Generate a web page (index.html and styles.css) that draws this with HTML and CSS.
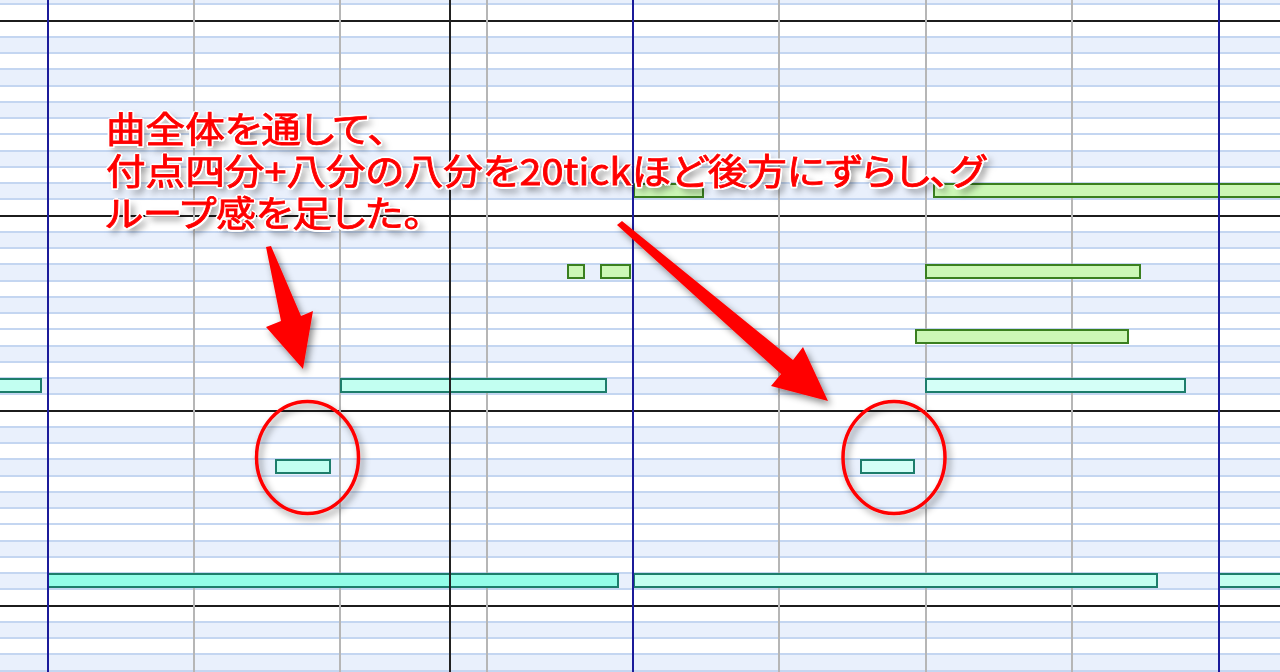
FILE: index.html
```html
<!DOCTYPE html>
<html lang="ja">
<head>
<meta charset="utf-8">
<title>Piano roll</title>
<link rel="stylesheet" href="styles.css">
</head>
<body>
<div class="roll">
  <div class="rows">
    <div class="r b"></div><div class="r w c"></div><div class="r w"></div><div class="r b"></div><div class="r w"></div><div class="r b"></div><div class="r w"></div><div class="r b"></div><div class="r w"></div><div class="r w"></div><div class="r b"></div><div class="r w"></div>
    <div class="r b"></div><div class="r w c"></div><div class="r w"></div><div class="r b"></div><div class="r w"></div><div class="r b"></div><div class="r w"></div><div class="r b"></div><div class="r w"></div><div class="r w"></div><div class="r b"></div><div class="r w"></div>
    <div class="r b"></div><div class="r w c"></div><div class="r w"></div><div class="r b"></div><div class="r w"></div><div class="r b"></div><div class="r w"></div><div class="r b"></div><div class="r w"></div><div class="r w"></div><div class="r b"></div><div class="r w"></div>
    <div class="r b"></div><div class="r w c"></div><div class="r w"></div><div class="r b"></div><div class="r w"></div><div class="r b"></div><div class="r w"></div>
  </div>

  <div class="beats">
    <div class="beat"></div><div class="beat"></div><div class="beat"></div><div class="beat"></div><div class="beat"></div><div class="beat"></div><div class="beat"></div><div class="beat"></div><div class="beat"></div><div class="beat"></div><div class="beat"></div>
  </div>

  <div class="notes">
    <div class="note green" style="left:633px;width:71px;top:183px"></div>
    <div class="note green" style="left:933px;width:352px;top:183px"></div>
    <div class="note green" style="left:567px;width:18px;top:264px"></div>
    <div class="note green" style="left:600px;width:31px;top:264px"></div>
    <div class="note green" style="left:925px;width:216px;top:264px"></div>
    <div class="note green" style="left:915px;width:214px;top:329px"></div>

    <div class="note cyan" style="left:-4px;width:46px;top:378px"></div>
    <div class="note cyan" style="left:340px;width:267px;top:378px"></div>
    <div class="note cyan pale" style="left:925px;width:261px;top:378px"></div>
    <div class="note cyan" style="left:275px;width:56px;top:459px"></div>
    <div class="note cyan pale" style="left:860px;width:55px;top:459px"></div>
    <div class="note cyan deep" style="left:47px;width:572px;top:573px"></div>
    <div class="note cyan" style="left:633px;width:525px;top:573px"></div>
    <div class="note cyan" style="left:1218px;width:70px;top:573px"></div>
  </div>

  <div class="bars">
    <div class="bar"></div><div class="bar"></div><div class="bar"></div><div class="bar"></div>
  </div>
  <div class="cursor"></div>

  <svg class="marks" width="1280" height="672" viewBox="0 0 1280 672" aria-hidden="true">
    <defs>
      <filter id="shadow" x="-20%" y="-20%" width="140%" height="140%">
        <feDropShadow dx="3" dy="4" stdDeviation="3.5" flood-color="#000" flood-opacity="0.45"/>
      </filter>
    </defs>
    <g filter="url(#shadow)" fill="#ff0000">
      <polygon points="266,247 271,246 301,316 313,311 303,369 266,327 281,321"/>
      <polygon points="622,221 793,360 803,347 828,401 771,386 781,374 617,225"/>
    </g>
    <g filter="url(#shadow)" fill="none" stroke="#ff0000" stroke-width="3.5">
      <ellipse cx="307.5" cy="457.5" rx="51" ry="56"/>
      <ellipse cx="894" cy="457.5" rx="51" ry="56"/>
    </g>
  </svg>

  <p class="caption">
    <span class="line">曲全体を通して、</span>
    <span class="line">付点四分+八分の八分を20tickほど後方にずらし、グ</span>
    <span class="line">ループ感を足した。</span>
  </p>
</div>
</body>
</html>
```

FILE: styles.css
```css
html, body {
  margin: 0;
  padding: 0;
  background: #ffffff;
}

.roll {
  position: relative;
  width: 1280px;
  height: 672px;
  overflow: hidden;
  background: #ffffff;
}

.rows {
  display: flex;
  flex-direction: column;
  margin-top: -11px;
}

.r {
  height: 16.25px;
  flex: none;
  box-sizing: border-box;
  border-bottom: 2px solid #c4d6f1;
}

.r.w { background: #ffffff; }
.r.b { background: #e9f0fc; }
.r.c { border-bottom-color: #1c1c1c; }

.beats {
  position: absolute;
  top: 0;
  bottom: 0;
  left: -99.9px;
  display: flex;
}

.beat {
  flex: none;
  width: 146.4px;
  box-sizing: border-box;
  border-left: 2px solid #b6b6b6;
}

.notes {
  position: absolute;
  inset: 0;
}

.note {
  position: absolute;
  height: 15px;
  box-sizing: border-box;
  border: 2px solid #1d7d6b;
}

.note.green {
  background: #ccf7b6;
  border-color: #3a7f1f;
}

.note.cyan { background: #c2fff1; }
.note.cyan.pale { background: #d4fff7; }
.note.cyan.deep { background: #93fde8; }

.bars {
  position: absolute;
  top: 0;
  bottom: 0;
  left: 46.5px;
  display: flex;
}

.bar {
  flex: none;
  width: 585.6px;
  box-sizing: border-box;
  border-left: 2px solid #1b1b9a;
}

.cursor {
  position: absolute;
  top: 0;
  bottom: 0;
  left: 449px;
  width: 2px;
  background: #222222;
}

.marks {
  position: absolute;
  left: 0;
  top: 0;
}

.caption {
  position: absolute;
  left: 106px;
  top: 106px;
  margin: 0;
  font-family: "Noto Sans CJK JP", "Noto Sans", sans-serif;
  font-size: 36px;
  line-height: 42px;
  font-weight: 400;
  font-feature-settings: "palt";
  letter-spacing: 0;
  color: #ff0000;
  -webkit-text-stroke: 0.8px #ff0000;
  white-space: nowrap;
  transform: scaleX(1.1);
  transform-origin: left top;
  text-shadow:
    -2px 0 0 #fff, 2px 0 0 #fff, 0 -2px 0 #fff, 0 2px 0 #fff,
    -1.5px -1.5px 0 #fff, 1.5px -1.5px 0 #fff, -1.5px 1.5px 0 #fff, 1.5px 1.5px 0 #fff,
    4px 5px 7px rgba(0, 0, 0, 0.6);
}

.line {
  display: block;
}
```
